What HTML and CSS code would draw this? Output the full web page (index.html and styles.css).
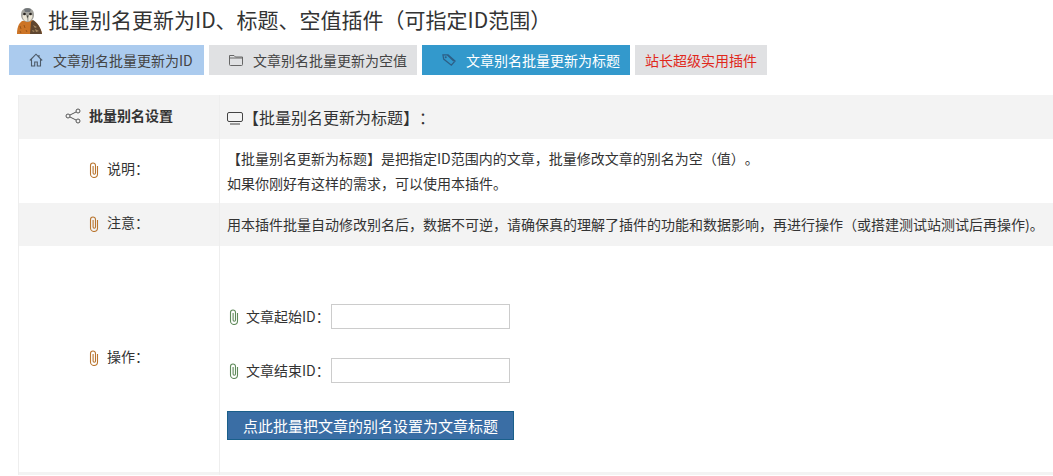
FILE: index.html
```html
<!DOCTYPE html>
<html>
<head>
	<title>批量别名更新</title>
	<link rel="stylesheet" href="styles.css">
</head>
<body>
	<svg class="defs" width="0" height="0">
		<symbol id="clip" viewBox="0 0 10 16">
			<path d="M8.500 4v8a3.500 3.500 0 0 1-7 0V3.500a2.500 2.500 0 0 1 5 0V11a1.200 1.200 0 0 1-2.400 0V4" fill="none" stroke="currentColor" stroke-width="1.100"/>
		</symbol>
	</svg>

	<div class="page-title">
		<svg class="logo" viewBox="0 0 25 27">
			<path d="M0 27c0-5 1-10 5-13l10-1c5 2 9 8 10 14z" fill="#cc7426"/>
			<path d="M14 15l2-2c4 2 8 8 9 14H13z" fill="#5f4630"/>
			<path d="M16 18l4 2-2 1zM18 22l4 2-3 1zM15 23l3 1-2 1z" fill="#a98a62"/>
			<path d="M3 19l1 3M7 18l1 3M3 24l1 2M9 23l1 2" stroke="#9a5518" fill="none"/>
			<path d="M4 8C4 3 7 1 10.500 1S17 3 17 8c0 4-3 7-6.500 7S4 12 4 8z" fill="#a3a29c"/>
			<path d="M5.500 8.500c1-1 3-1 4 0l1 6c-3 0-5-3-5-6zM11.500 8.500c1-1 3-1 4 0 0 3-1.500 5-4 6z" fill="#ece6d6"/>
			<path d="M7 2c2-1 5-1 7 0l-1 3H8z" fill="#6f7478"/>
			<circle cx="7.500" cy="7" r="1.300" fill="#26231f"/>
			<circle cx="13.500" cy="7" r="1.300" fill="#26231f"/>
			<path d="M9.500 8.500h2.200l-1 2.800z" fill="#4b4a40"/>
		</svg>
		<h1>批量别名更新为ID、标题、空值插件（可指定ID范围）</h1>
	</div>

	<div class="tabs">
		<a class="tab tab-home">
			<svg class="tab-icon" viewBox="0 0 14 14"><path d="M.8 7.500L7 1.200l6.200 6.300M2.500 6v7h3.200V9h2.600v4h3.200V6M10 2v2" fill="none" stroke="#4d5a68" stroke-width="1.100"/></svg>
			文章别名批量更新为ID
		</a>
		<a class="tab tab-folder">
			<svg class="tab-icon" viewBox="0 0 14 14"><path d="M.5 11.500V2.500h4.500l1.500 1.500h7v7.500q0 1-1 1h-11q-1 0-1-1zM.5 5h13" fill="none" stroke="#666" stroke-width="1"/></svg>
			文章别名批量更新为空值
		</a>
		<a class="tab tab-title">
			<svg class="tab-icon" viewBox="0 0 15 14"><path d="M1 1.500h5.500l7.500 6.500-4 4.500L1.800 6zM6.500 1.500l-.5.500 6.500 6" fill="none" stroke="#2d5f86" stroke-width="1.300"/><circle cx="4" cy="4" r="1.100" fill="#2d5f86"/></svg>
			文章别名批量更新为标题
		</a>
		<a class="tab tab-plain">站长超级实用插件</a>
	</div>

	<table class="settings">
		<tr class="row-head">
			<th class="col-left">
				<svg class="share-icon" viewBox="0 0 16 16"><g fill="none" stroke="#555" stroke-width="1"><circle cx="13" cy="3" r="2"/><circle cx="13" cy="13" r="2"/><circle cx="3" cy="8" r="2"/><path d="M5 7l6-3M5 9l6 3"/></g></svg>
				批量别名设置
			</th>
			<td class="head-right">
				<svg class="screen-icon" viewBox="0 0 16 13"><path d="M2 .5h12q1.500 0 1.500 1.500v6q0 1.500-1.500 1.500H2Q.5 9.500.5 8V2Q.5.5 2 .5zM3 12h10" fill="none" stroke="#444" stroke-width="1"/></svg>【批量别名更新为标题】：
			</td>
		</tr>
		<tr class="row-desc">
			<td class="col-left"><svg class="clip orange"><use href="#clip"/></svg>说明：</td>
			<td>
				<p>【批量别名更新为标题】是把指定ID范围内的文章，批量修改文章的别名为空（值）。</p>
				<p>如果你刚好有这样的需求，可以使用本插件。</p>
			</td>
		</tr>
		<tr class="row-note">
			<td class="col-left"><svg class="clip orange"><use href="#clip"/></svg>注意：</td>
			<td>用本插件批量自动修改别名后，数据不可逆，请确保真的理解了插件的功能和数据影响，再进行操作（或搭建测试站测试后再操作)。</td>
		</tr>
		<tr class="row-action">
			<td class="col-left"><svg class="clip orange"><use href="#clip"/></svg>操作：</td>
			<td class="action-right">
				<form class="id-form">
					<div class="field">
						<svg class="clip green"><use href="#clip"/></svg>
						<label>文章起始ID：</label>
						<input type="text">
					</div>
					<div class="field">
						<svg class="clip green"><use href="#clip"/></svg>
						<label>文章结束ID：</label>
						<input type="text">
					</div>
					<button type="button" class="submit-btn">点此批量把文章的别名设置为文章标题</button>
				</form>
			</td>
		</tr>
		<tr class="row-foot">
			<td class="col-left"></td>
			<td></td>
		</tr>
	</table>
</body>
</html>
```

FILE: styles.css
```css
* {
	margin: 0;
	padding: 0;
	box-sizing: border-box;
}

html, body {
	height: 476px;
	overflow: hidden;
}

body {
	background-color: #fff;
	color: #333;
	font-family: "Noto Sans CJK SC", "Liberation Sans", sans-serif;
	font-size: 14px;
	text-spacing-trim: space-all;
}

.defs {
	display: block;
}

.page-title {
	display: flex;
	align-items: center;
	height: 39px;
	padding: 0 0 0 17px;
}

.logo {
	width: 25px;
	height: 27px;
	margin-right: 6px;
	margin-top: 1px;
}

h1 {
	font-size: 21px;
	font-weight: 400;
	line-height: 39px;
	color: #333;
	white-space: nowrap;
}

.tabs {
	display: flex;
	gap: 5px;
	margin: 6px 0 0 9px;
}

.tab {
	display: flex;
	align-items: center;
	height: 30px;
	padding: 0 10px;
	background-color: #e0e1e3;
	color: #444;
	white-space: nowrap;
}

.tab-icon {
	width: 14px;
	height: 14px;
	margin-right: 10px;
}

.tab-home {
	width: 195px;
	padding-left: 20px;
	background-color: #abcbee;
}

.tab-folder {
	width: 208px;
	padding-left: 20px;
}

.tab-title {
	width: 208px;
	padding-left: 20px;
	background-color: #3399cc;
	color: #fff;
}

.tab-plain {
	width: 132px;
	color: #e0281c;
}

.settings {
	width: 1035px;
	margin: 20px 0 0 18px;
	border-collapse: collapse;
	table-layout: fixed;
}

.settings td, .settings th {
	border-left: 1px solid #eee;
	padding: 0 7px 1px;
	font-weight: 400;
	text-align: left;
	vertical-align: middle;
	white-space: nowrap;
}

.settings .col-left {
	width: 201px;
	padding-bottom: 6px;
	text-align: center;
}

.settings p {
	line-height: 25px;
}

.row-head {
	height: 44px;
	background-color: #f3f3f3;
}

.settings .row-head th {
	padding-bottom: 4px;
	font-weight: 700;
	color: #333;
}

.share-icon {
	width: 16px;
	height: 16px;
	margin-right: 5px;
	vertical-align: -3px;
}

.head-right {
	font-size: 16px;
}

.screen-icon {
	width: 16px;
	height: 13px;
	vertical-align: -1px;
}

.row-desc {
	height: 64px;
}

.row-note {
	height: 43px;
	background-color: #f3f3f3;
}

.row-action {
	height: 226px;
}

.row-foot {
	background-color: #f3f3f3;
}

.settings .row-foot td {
	height: 3px;
	padding: 0;
	font-size: 0;
}

.clip {
	width: 10px;
	height: 16px;
	margin-right: 8px;
	vertical-align: -4px;
}

.orange {
	color: #b9752f;
}

.green {
	color: #5f8a5a;
}

.settings .action-right {
	padding-top: 58px;
	vertical-align: top;
}

.id-form {
	display: flex;
	flex-direction: column;
	align-items: flex-start;
}

.field {
	display: flex;
	align-items: center;
	height: 25px;
	margin: 0 0 29px 2px;
}

.field .clip {
	margin-right: 7px;
}

.field label {
	width: 85px;
	padding-bottom: 2px;
	color: #333;
}

.field input {
	width: 179px;
	height: 25px;
	border: 1px solid #ccc;
	background-color: #fff;
}

.submit-btn {
	width: 287px;
	height: 29px;
	margin-top: -1px;
	background-color: #3a6ea5;
	border: 1px solid #1a5f8a;
	color: #fff;
	font-family: inherit;
	font-size: 15px;
}
```
